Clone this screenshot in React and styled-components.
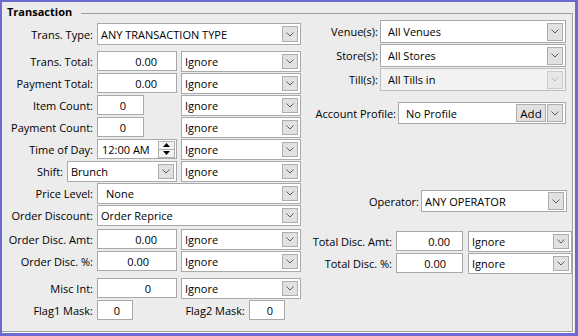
import React from "react";
import styled, { createGlobalStyle } from "styled-components";

const Global = createGlobalStyle`
  html, body { margin: 0; padding: 0; background: #ececec; }
  body {
    font-family: "Open Sans", "Segoe UI", "Liberation Sans", sans-serif;
    font-size: 11px;
    color: #000;
  }
  * { box-sizing: border-box; }
`;

const Window = styled.div`
  width: 578px;
  height: 336px;
  border-style: solid;
  border-color: #6b6bd2;
  border-width: 2px 3px 3px 2px;
  background: #ececec;
  padding-top: 3px;
  display: flex;
  flex-direction: column;
`;

const Group = styled.fieldset`
  flex: 1;
  min-width: 0;
  margin: 0 2px 1px 0;
  padding: 0;
  border: 1px solid #a0a0a0;
  border-left: none;
  box-shadow: 1px 1px 0 #ffffff;
`;

const Legend = styled.legend`
  padding: 0 9px 4px 5px;
  font-weight: 700;
  font-size: 11px;
  line-height: 13px;
`;

const Columns = styled.div`
  display: flex;
  align-items: flex-start;
`;

const LeftCol = styled.div`
  width: 299px;
  display: flex;
  flex-direction: column;
  padding-top: 1px;
`;

const RightCol = styled.div`
  width: 266px;
  margin-left: 5px;
  margin-top: -2px;
  display: flex;
  flex-direction: column;
`;

const Row = styled.div`
  display: flex;
  align-items: center;
  height: ${(p) => p.$h || 22}px;
  margin-top: ${(p) => p.$mt || 0}px;
`;

const Label = styled.span`
  width: ${(p) => p.$w}px;
  flex-shrink: 0;
  text-align: right;
  padding-right: ${(p) => (p.$pr === undefined ? 4 : p.$pr)}px;
  white-space: nowrap;
  line-height: 15px;
`;

const TextBox = styled.div`
  width: ${(p) => p.$w}px;
  height: ${(p) => p.$h || 20}px;
  flex-shrink: 0;
  border: 1px solid #a9a9a9;
  background: #ffffff;
  display: flex;
  align-items: center;
  justify-content: flex-end;
  padding-right: ${(p) => p.$pr || 2}px;
  line-height: 15px;
  white-space: nowrap;
`;

const TimeBox = styled(TextBox)`
  justify-content: space-between;
  padding: 0 1px 0 4px;
`;

const Spin = styled.div`
  width: 17px;
  height: 17px;
  display: flex;
  flex-direction: column;
  border: 1px solid #b0b0b0;
  background: #f3f3f3;
`;

const SpinHalf = styled.div`
  flex: 1;
  display: flex;
  align-items: center;
  justify-content: center;
  & + & {
    border-top: 1px solid #b0b0b0;
  }
`;

const ComboBox = styled.div`
  width: ${(p) => p.$w}px;
  height: ${(p) => p.$h}px;
  flex-shrink: 0;
  margin-left: ${(p) => (p.$auto ? "auto" : "0")};
  border: 1px solid ${(p) => (p.$disabled ? "#bcbcbc" : "#a9a9a9")};
  background: ${(p) => (p.$disabled ? "#f2f2f2" : "#ffffff")};
  display: flex;
  align-items: center;
  gap: 1px;
  padding: 0 2px 0 ${(p) => p.$pl}px;
`;

const ComboText = styled.span`
  flex: 1;
  white-space: nowrap;
  overflow: hidden;
  line-height: 15px;
`;

const DropBtn = styled.span`
  width: 16px;
  height: ${(p) => p.$h}px;
  flex-shrink: 0;
  border: 1px solid ${(p) => (p.$disabled ? "#cdcdcd" : "#adadad")};
  background: ${(p) => (p.$disabled ? "#e8e8e8" : "#e1e1e1")};
  display: flex;
  align-items: center;
  justify-content: center;
`;

const AddBtn = styled.span`
  width: 30px;
  height: ${(p) => p.$h}px;
  flex-shrink: 0;
  border: 1px solid #adadad;
  background: #e1e1e1;
  display: flex;
  align-items: center;
  justify-content: center;
  line-height: 15px;
  font-size: 11.5px;
`;

const Chevron = ({ color }) => (
  <svg width="8" height="5" viewBox="0 0 8 5">
    <polyline
      points="0.5,0.5 4,4 7.5,0.5"
      fill="none"
      stroke={color}
      strokeWidth="1"
    />
  </svg>
);

const Tri = ({ up }) => (
  <svg width="7" height="4" viewBox="0 0 7 4">
    <polygon points={up ? "3.5,0 7,4 0,4" : "0,0 7,0 3.5,4"} fill="#000" />
  </svg>
);

function Combo({ w, h = 21, value, pl = 3, auto, disabled, btnH, add }) {
  const bh = btnH || h - 6;
  return (
    <ComboBox $w={w} $h={h} $pl={pl} $auto={auto} $disabled={disabled}>
      <ComboText>{value}</ComboText>
      {add && <AddBtn $h={bh}>Add</AddBtn>}
      <DropBtn $h={bh} $disabled={disabled}>
        <Chevron color={disabled ? "#b8b8b8" : "#5a5a5a"} />
      </DropBtn>
    </ComboBox>
  );
}

export default function App() {
  return (
    <>
      <Global />
      <Window>
        <Group>
          <Legend>Transaction</Legend>
          <Columns>
            <LeftCol>
              <Row>
                <Label $w={95}>Trans. Type:</Label>
                <Combo w={204} h={22} value="ANY TRANSACTION TYPE" pl={3} />
              </Row>
              <Row $mt={5}>
                <Label $w={95}>Trans. Total:</Label>
                <TextBox $w={80} $pr={19}>0.00</TextBox>
                <Combo w={120} value="Ignore" auto />
              </Row>
              <Row>
                <Label $w={95}>Payment Total:</Label>
                <TextBox $w={80} $pr={19}>0.00</TextBox>
                <Combo w={120} value="Ignore" auto />
              </Row>
              <Row>
                <Label $w={95}>Item Count:</Label>
                <TextBox $w={47} $pr={17}>0</TextBox>
                <Combo w={120} value="Ignore" auto />
              </Row>
              <Row>
                <Label $w={95}>Payment Count:</Label>
                <TextBox $w={47} $pr={17}>0</TextBox>
                <Combo w={120} value="Ignore" auto />
              </Row>
              <Row>
                <Label $w={95}>Time of Day:</Label>
                <TimeBox $w={80}>
                  <span>12:00 AM</span>
                  <Spin>
                    <SpinHalf>
                      <Tri up />
                    </SpinHalf>
                    <SpinHalf>
                      <Tri />
                    </SpinHalf>
                  </Spin>
                </TimeBox>
                <Combo w={120} value="Ignore" auto />
              </Row>
              <Row>
                <Label $w={65}>Shift:</Label>
                <Combo w={110} value="Brunch" pl={3} />
                <Combo w={120} value="Ignore" auto />
              </Row>
              <Row>
                <Label $w={95}>Price Level:</Label>
                <Combo w={204} value="None" pl={8} />
              </Row>
              <Row>
                <Label $w={95}>Order Discount:</Label>
                <Combo w={204} value="Order Reprice" pl={3} />
              </Row>
              <Row $mt={2}>
                <Label $w={95}>Order Disc. Amt:</Label>
                <TextBox $w={80} $pr={19}>0.00</TextBox>
                <Combo w={120} value="Ignore" auto />
              </Row>
              <Row>
                <Label $w={95}>Order Disc. %:</Label>
                <TextBox $w={80} $pr={27}>0.00</TextBox>
                <Combo w={120} value="Ignore" auto />
              </Row>
              <Row $mt={5}>
                <Label $w={95}>Misc Int:</Label>
                <TextBox $w={80} $pr={25}>0</TextBox>
                <Combo w={120} value="Ignore" auto />
              </Row>
              <Row>
                <Label $w={95}>Flag1 Mask:</Label>
                <TextBox $w={36} $pr={12}>0</TextBox>
                <Label $w={116}>Flag2 Mask:</Label>
                <TextBox $w={36} $pr={11}>0</TextBox>
              </Row>
            </LeftCol>
            <RightCol>
              <Row $h={23}>
                <Label $w={74} $pr={2}>Venue(s):</Label>
                <Combo w={186} h={23} btnH={18} value="All Venues" pl={7} />
              </Row>
              <Row $h={23} $mt={1}>
                <Label $w={74} $pr={2}>Store(s):</Label>
                <Combo w={186} h={23} btnH={18} value="All Stores" pl={7} />
              </Row>
              <Row $h={23} $mt={1}>
                <Label $w={74} $pr={2}>Till(s):</Label>
                <Combo
                  w={186}
                  h={23}
                  btnH={18}
                  value="All Tills in"
                  pl={7}
                  disabled
                />
              </Row>
              <Row $mt={11}>
                <Label $w={92} $pr={2}>Account Profile:</Label>
                <Combo w={168} h={22} btnH={18} value="No Profile" pl={7} add />
              </Row>
              <Row $mt={66}>
                <Label $w={115} $pr={2}>Operator:</Label>
                <Combo w={146} h={22} btnH={18} value="ANY OPERATOR" pl={3} />
              </Row>
              <Row $mt={18}>
                <Label $w={90} $pr={4}>Total Disc. Amt:</Label>
                <TextBox $w={67} $pr={12}>0.00</TextBox>
                <Combo w={104} value="Ignore" auto />
              </Row>
              <Row>
                <Label $w={90} $pr={4}>Total Disc. %:</Label>
                <TextBox $w={67} $pr={16}>0.00</TextBox>
                <Combo w={104} value="Ignore" auto />
              </Row>
            </RightCol>
          </Columns>
        </Group>
      </Window>
    </>
  );
}
